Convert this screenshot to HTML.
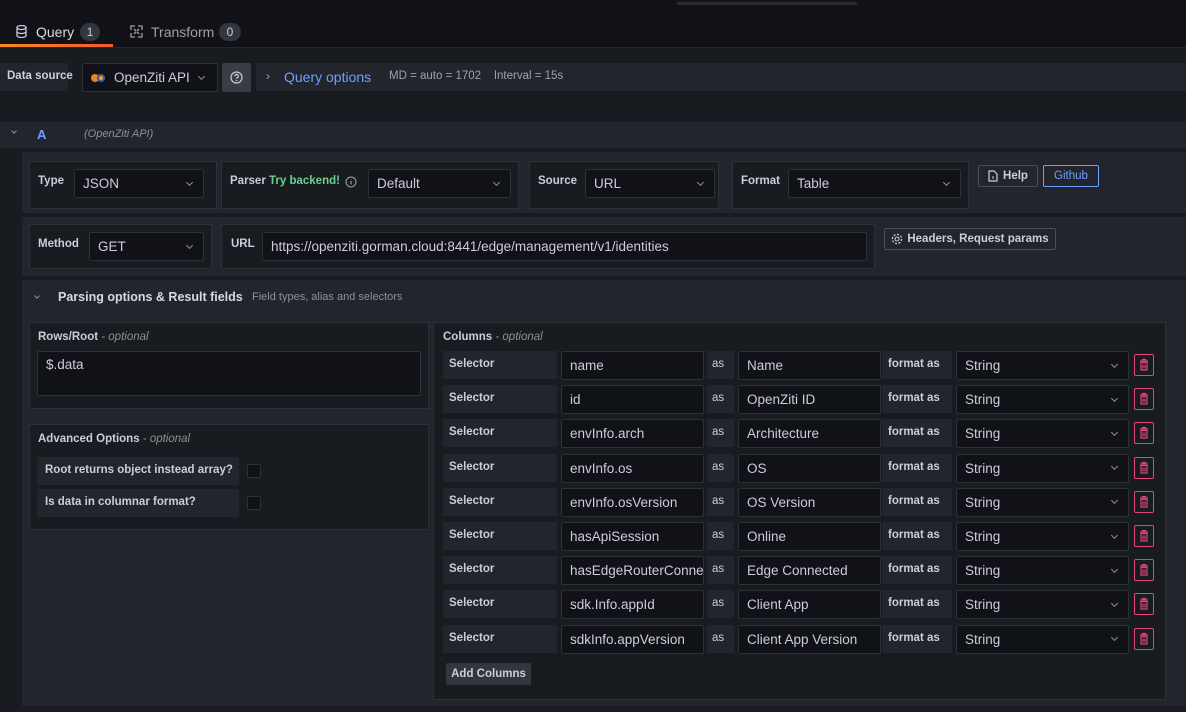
<!DOCTYPE html>
<html><head><meta charset="utf-8"><style>
*{box-sizing:border-box;margin:0;padding:0}
body{width:1186px;height:712px;background:#181b1f;font-family:"Liberation Sans",sans-serif;color:#ccccdc;position:relative;overflow:hidden;font-size:12px}
.a{position:absolute}
.lbl{position:absolute;font-weight:bold;font-size:11.5px;color:#ccccdc}
.box{position:absolute;background:#181b1f;border:1px solid #2d3036}
.inp{position:absolute;background:#111217;border:1px solid #2d3036;border-radius:2px;font-size:13.5px;color:#ccccdc;padding-left:8px;display:flex;align-items:center}
.chev{position:absolute;right:11px;top:50%;margin-top:-4px;width:5px;height:5px;border-right:1.2px solid #8e9099;border-bottom:1.2px solid #8e9099;transform:rotate(45deg)}
.sec{position:absolute;background:#22252b}
.opt{font-style:italic;font-weight:normal;color:#8e9099}
.btn{position:absolute;border:1px solid #4a4d54;border-radius:2px;font-weight:bold;font-size:11.5px;display:flex;align-items:center;justify-content:center;color:#ccccdc}
.sl{position:absolute;background:#22252b;font-weight:600;font-size:11.5px;padding:7px 0 0 6px;height:28px}
.del{position:absolute;width:20px;height:22px;border:1px solid #e0457b;border-radius:2px}
</style></head><body>
<div class="a" style="left:0;top:0;width:1186px;height:48px;background:#111217;border-bottom:1px solid #25272d"></div>
<div class="a" style="left:677px;top:2px;width:180px;height:3px;background:#2a2c32;border-radius:2px"></div>
<svg class="a" style="left:16px;top:25px" width="11" height="13" viewBox="0 0 11 13"><ellipse cx="5.5" cy="2.5" rx="4.5" ry="2" fill="none" stroke="#ccccdc" stroke-width="1.3"/><path d="M1 2.5v8c0 1.1 2 2 4.5 2s4.5-.9 4.5-2v-8M1 6.5c0 1.1 2 2 4.5 2s4.5-.9 4.5-2" fill="none" stroke="#ccccdc" stroke-width="1.3"/></svg>
<div class="a" style="left:36px;top:24px;font-size:14px;color:#d8d9df">Query</div>
<div class="a" style="left:80px;top:23px;width:20px;height:18px;background:#33363c;border-radius:9px;font-size:12px;text-align:center;line-height:18px">1</div>
<div class="a" style="left:0;top:44px;width:113px;height:3px;background:linear-gradient(90deg,#f8891a,#f05a28)"></div>
<svg class="a" style="left:130px;top:25px" width="13" height="13" viewBox="0 0 13 13" fill="none" stroke="#9fa1a7" stroke-width="1.3"><path d="M1 5V1h4M8 1h4v4M12 8v4H8M5 12H1V8M4 4l2 2M9 4 7 6M4 9l2-2M9 9 7 7"/></svg>
<div class="a" style="left:151px;top:24px;font-size:14px;color:#9fa1a7">Transform</div>
<div class="a" style="left:219px;top:23px;width:22px;height:18px;background:#33363c;border-radius:9px;font-size:12px;text-align:center;line-height:18px">0</div>

<div class="sec" style="left:0;top:63px;width:68px;height:28px"></div>
<div class="lbl" style="left:7px;top:70px">Data source</div>
<div class="inp" style="left:82px;top:63px;width:136px;height:29px;font-size:13.5px;padding-left:8px"><span style="display:inline-block;width:8px;height:8px;border-radius:50%;background:#e8832a;margin-right:-2px"></span><span style="display:inline-block;width:8px;height:8px;border-radius:50%;background:#ff9b2e;box-shadow:inset 0 0 0 2px #2d5fa8;margin-right:9px"></span>OpenZiti API<span class="chev" style="right:13px"></span></div>
<div class="a" style="left:222px;top:63px;width:29px;height:29px;background:#3a3d44;border-radius:2px"></div>
<svg class="a" style="left:230px;top:71px" width="13" height="13" viewBox="0 0 13 13"><circle cx="6.5" cy="6.5" r="5.5" fill="none" stroke="#ccccdc" stroke-width="1.2"/><path d="M4.8 5.2a1.7 1.7 0 1 1 2.4 1.5c-.5.3-.7.6-.7 1.1" fill="none" stroke="#ccccdc" stroke-width="1.2"/><circle cx="6.5" cy="9.6" r=".7" fill="#ccccdc"/></svg>
<div class="sec" style="left:256px;top:63px;width:930px;height:28px"></div>
<div class="a" style="left:266px;top:69px;color:#9fa1a7;font-size:12px">›</div>
<div class="a" style="left:284px;top:69px;color:#6e9fff;font-size:14px">Query options</div>
<div class="a" style="left:389px;top:70px;color:#9fa1a7;font-size:11.5px">MD = auto = 1702&nbsp;&nbsp;&nbsp;&nbsp;Interval = 15s</div>

<div class="sec" style="left:0;top:122px;width:1186px;height:26px"></div>
<div class="a" style="left:12px;top:129px;width:4px;height:4px;border-right:1.1px solid #8e9099;border-bottom:1.1px solid #8e9099;transform:rotate(45deg)"></div>
<div class="a" style="left:37px;top:127px;color:#6e9fff;font-weight:bold;font-size:13px">A</div>
<div class="a" style="left:84px;top:128px;color:#8e9099;font-style:italic;font-size:11px">(OpenZiti API)</div>

<div class="a" style="left:0;top:148px;width:22px;height:564px;background:#181b1f"></div>
<div class="sec" style="left:22px;top:152px;width:1164px;height:554px"></div>
<div class="a" style="left:0;top:706px;width:1186px;height:6px;background:#181b1f"></div>
<div class="a" style="left:22px;top:213px;width:1164px;height:4px;background:#181b1f"></div>
<div class="a" style="left:22px;top:276px;width:1164px;height:4px;background:#181b1f"></div>

<div class="box" style="left:29px;top:161px;width:188px;height:48px"></div>
<div class="lbl" style="left:38px;top:175px">Type</div>
<div class="inp" style="left:74px;top:169px;width:130px;height:29px">JSON<span class="chev"></span></div>
<div class="box" style="left:221px;top:161px;width:298px;height:48px"></div>
<div class="lbl" style="left:230px;top:175px">Parser</div>
<div class="a" style="left:269px;top:175px;color:#6ccf8e;font-weight:bold;font-size:11.5px">Try backend!</div>
<svg class="a" style="left:345px;top:176px" width="12" height="12" viewBox="0 0 12 12"><circle cx="6" cy="6" r="5" fill="none" stroke="#9fa1a7"/><path d="M6 5v3.5M6 3.2v.4" stroke="#9fa1a7" stroke-width="1.2"/></svg>
<div class="inp" style="left:368px;top:169px;width:143px;height:29px">Default<span class="chev"></span></div>
<div class="box" style="left:529px;top:161px;width:190px;height:48px"></div>
<div class="lbl" style="left:538px;top:175px">Source</div>
<div class="inp" style="left:585px;top:169px;width:130px;height:29px">URL<span class="chev"></span></div>
<div class="box" style="left:732px;top:161px;width:237px;height:48px"></div>
<div class="lbl" style="left:741px;top:175px">Format</div>
<div class="inp" style="left:788px;top:169px;width:173px;height:29px">Table<span class="chev"></span></div>
<div class="btn" style="left:978px;top:165px;width:60px;height:22px"><svg width="10" height="12" viewBox="0 0 10 12" style="margin-right:5px"><path d="M1 1h5l3 3v7H1z" fill="none" stroke="#ccccdc" stroke-width="1.2"/><path d="M5 6v3" stroke="#ccccdc"/></svg>Help</div>
<div class="btn" style="left:1043px;top:165px;width:56px;height:22px;border-color:#6e9fff;color:#6e9fff;font-weight:normal">Github</div>

<div class="box" style="left:29px;top:224px;width:183px;height:45px"></div>
<div class="lbl" style="left:38px;top:238px">Method</div>
<div class="inp" style="left:89px;top:232px;width:115px;height:29px">GET<span class="chev"></span></div>
<div class="box" style="left:221px;top:224px;width:654px;height:45px"></div>
<div class="lbl" style="left:231px;top:238px">URL</div>
<div class="inp" style="left:262px;top:232px;width:605px;height:29px">https://openziti.gorman.cloud:8441/edge/management/v1/identities</div>
<div class="btn" style="left:884px;top:228px;width:172px;height:22px"><svg width="12" height="12" viewBox="0 0 12 12" style="margin-right:4px"><circle cx="6" cy="6" r="2" fill="none" stroke="#ccccdc" stroke-width="1.1"/><circle cx="6" cy="6" r="4.6" fill="none" stroke="#ccccdc" stroke-width="1.3" stroke-dasharray="2 1.6"/></svg>Headers, Request params</div>

<div class="a" style="left:35px;top:294px;width:4px;height:4px;border-right:1.1px solid #8e9099;border-bottom:1.1px solid #8e9099;transform:rotate(45deg)"></div>
<div class="a" style="left:58px;top:290px;font-weight:bold;font-size:12.5px;color:#d8d9df">Parsing options &amp; Result fields</div>
<div class="a" style="left:252px;top:291px;font-size:11px;color:#8e9099">Field types, alias and selectors</div>

<div class="box" style="left:29px;top:322px;width:400px;height:87px"></div>
<div class="lbl" style="left:38px;top:331px">Rows/Root <span class="opt">- optional</span></div>
<div class="a" style="left:37px;top:351px;width:384px;height:45px;background:#111217;border:1px solid #2d3036;border-radius:2px;font-size:13.5px;padding:5px 8px">$.data</div>
<div class="box" style="left:29px;top:424px;width:400px;height:106px"></div>
<div class="lbl" style="left:38px;top:433px">Advanced Options <span class="opt">- optional</span></div>
<div class="sl" style="left:37px;top:457px;width:202px;padding:7px 0 0 8px">Root returns object instead array?</div>
<div class="a" style="left:247px;top:464px;width:14px;height:14px;background:#111217;border:1px solid #2d3036;border-radius:2px"></div>
<div class="sl" style="left:37px;top:489px;width:202px;padding:7px 0 0 8px">Is data in columnar format?</div>
<div class="a" style="left:247px;top:496px;width:14px;height:14px;background:#111217;border:1px solid #2d3036;border-radius:2px"></div>

<div class="box" style="left:433px;top:322px;width:733px;height:378px"></div>
<div class="lbl" style="left:443px;top:331px">Columns <span class="opt">- optional</span></div>
<div id="rows"></div>
<div class="a" style="left:446px;top:663px;width:85px;height:22px;background:#33363c;border-radius:2px;font-weight:600;font-size:11.5px;text-align:center;line-height:22px">Add Columns</div>
<script>
var d=[["name","Name"],["id","OpenZiti ID"],["envInfo.arch","Architecture"],["envInfo.os","OS"],["envInfo.osVersion","OS Version"],["hasApiSession","Online"],["hasEdgeRouterConnection","Edge Connected"],["sdk.Info.appId","Client App"],["sdkInfo.appVersion","Client App Version"]];
var h="";d.forEach(function(r,i){var y=351+i*34.2;
h+='<div class="sl" style="left:443px;top:'+y+'px;width:114px">Selector</div>'+
'<div class="inp" style="left:561px;top:'+y+'px;width:143px;height:29px;overflow:hidden;white-space:nowrap">'+r[0]+'</div>'+
'<div class="sl" style="left:707px;top:'+y+'px;width:27px;padding-left:5px;font-weight:normal">as</div>'+
'<div class="inp" style="left:738px;top:'+y+'px;width:143px;height:29px">'+r[1]+'</div>'+
'<div class="sl" style="left:882px;top:'+y+'px;width:70px">format as</div>'+
'<div class="inp" style="left:956px;top:'+y+'px;width:173px;height:29px">String<span class="chev"></span></div>'+
'<div class="del" style="left:1134px;top:'+(y+3)+'px"><svg width="18" height="20" viewBox="0 0 18 20"><path d="M5 6h8M7.5 6V4.5h3V6M6 7.5h6v7.5H6zM8 9.5v4M10 9.5v4" fill="none" stroke="#e0457b" stroke-width="1.2"/></svg></div>';});
document.getElementById("rows").innerHTML=h;
</script>
</body></html>
